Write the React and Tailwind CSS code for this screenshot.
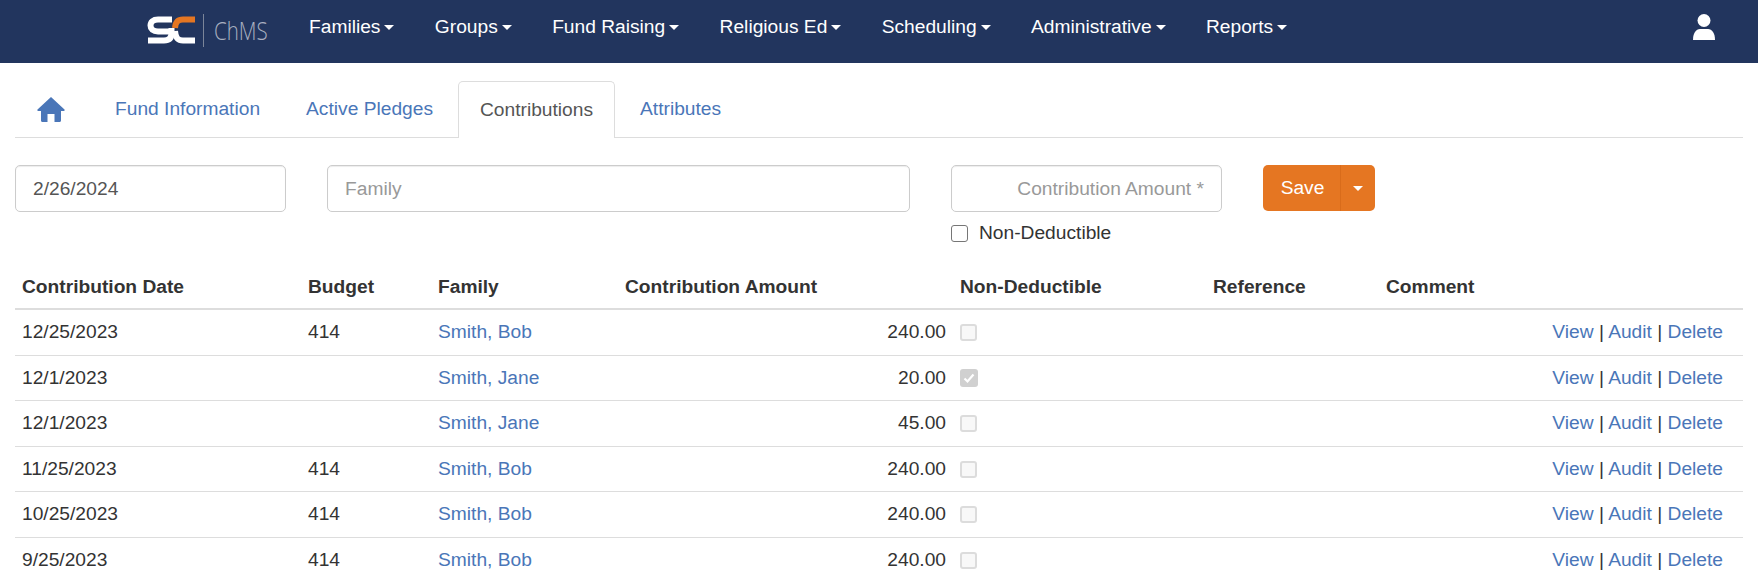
const navItems = ['Families', 'Groups', 'Fund Raising', 'Religious Ed', 'Scheduling', 'Administrative', 'Reports'];

const rows = [
  { date: '12/25/2023', budget: '414', family: 'Smith, Bob', amount: '240.00', checked: false },
  { date: '12/1/2023', budget: '', family: 'Smith, Jane', amount: '20.00', checked: true },
  { date: '12/1/2023', budget: '', family: 'Smith, Jane', amount: '45.00', checked: false },
  { date: '11/25/2023', budget: '414', family: 'Smith, Bob', amount: '240.00', checked: false },
  { date: '10/25/2023', budget: '414', family: 'Smith, Bob', amount: '240.00', checked: false },
  { date: '9/25/2023', budget: '414', family: 'Smith, Bob', amount: '240.00', checked: false },
];

function Logo() {
  return (
    <svg width="50" height="28" viewBox="0 0 50 28" fill="none">
      <path d="M25 3.5H11C6 3.5 3.5 6 3.5 9.5C3.5 13 6 15.5 11 15.5H25" stroke="#fff" strokeWidth="6" />
      <path d="M24.5 12V17C24.5 22 22 24.5 17 24.5H1" stroke="#fff" strokeWidth="6" />
      <path d="M48 3.5H36C31 3.5 28.5 6 28 12" stroke="#e57622" strokeWidth="6" />
      <path d="M28 15C28.5 22 31 24.5 36 24.5H48" stroke="#fff" strokeWidth="6" />
    </svg>
  );
}

function HomeIcon() {
  return (
    <svg width="28" height="25" viewBox="0 0 28 25" fill="#4a76b8">
      <path d="M14 0L27.5 12.5C28 13.2 27.6 14 26.8 14H24V23.5C24 24.4 23.4 25 22.5 25H17.5V17H10.5V25H5.5C4.6 25 4 24.4 4 23.5V14H1.2C.4 14 0 13.2.5 12.5Z" />
    </svg>
  );
}

function UserIcon() {
  return (
    <svg width="22" height="26" viewBox="0 0 22 26" fill="#fff">
      <circle cx="11" cy="6.5" r="6.5" />
      <path d="M0 26C0 19 3 15 7 15H15C19 15 22 19 22 26Z" />
    </svg>
  );
}

function RowCheck({ checked }) {
  if (checked) {
    return (
      <span className="flex h-[18px] w-[18px] items-center justify-center rounded-[3px] bg-[#d0d0d0]">
        <svg width="14" height="14" viewBox="0 0 14 14" fill="none">
          <path d="M2.5 7.5L5.5 10.5L11.5 3.5" stroke="#fff" strokeWidth="2.2" />
        </svg>
      </span>
    );
  }
  return <span className="block h-[17px] w-[17px] rounded-[3px] border-2 border-[#dcdcdc] bg-[#f8f8f8]" />;
}

export default function App() {
  return (
    <div className="h-[576px] overflow-hidden bg-white font-['Liberation_Sans',Arial,sans-serif] text-[19.2px] text-[#333]">
      <nav className="flex h-[63px] items-center bg-[#22355e] pb-[9px] pl-[147px] pr-[43px] text-white">
        <div className="mt-[6px] flex w-[162px] items-center">
          <Logo />
          <span className="ml-[6px] h-[33px] w-px bg-[#7b8599]" />
          <span className="ml-[10px] inline-block origin-left scale-x-[0.82] font-['Open_Sans',sans-serif] text-[25px] font-light leading-none text-[#a9b0c0]">ChMS</span>
        </div>
        <div className="flex gap-[40.4px]">
          {navItems.map(item => (
            <a key={item} className="flex items-center gap-[4px]">
              {item}
              <span className="mt-[1px] border-x-[5px] border-t-[5px] border-x-transparent border-t-white" />
            </a>
          ))}
        </div>
        <span className="ml-auto"><UserIcon /></span>
      </nav>

      <div className="mx-[15px] mt-[18px] flex h-[57px] border-b border-[#ddd]">
        <a className="flex w-[100px] items-center pl-[22px]">
          <HomeIcon />
        </a>
        <a className="flex items-center pr-[46px] text-[#4a76b8]">Fund Information</a>
        <a className="flex items-center pr-[25px] text-[#4a76b8]">Active Pledges</a>
        <a className="-mb-px flex items-center rounded-t-[5px] border border-b-0 border-[#ddd] bg-white px-[21px] text-[#555]">Contributions</a>
        <a className="flex items-center pl-[25px] text-[#4a76b8]">Attributes</a>
      </div>

      <div className="mx-[15px] mt-[27px] flex items-start">
        <div className="flex h-[47px] w-[271px] items-center rounded-[5px] border border-[#ccc] px-[17px] pt-[1px] text-[#555] shadow-[inset_0_1px_1px_rgba(0,0,0,0.075)]">2/26/2024</div>
        <div className="ml-[41px] flex h-[47px] w-[583px] items-center rounded-[5px] border border-[#ccc] px-[17px] pt-[1px] text-[#999] shadow-[inset_0_1px_1px_rgba(0,0,0,0.075)]">Family</div>
        <div className="ml-[41px] w-[271px]">
          <div className="flex h-[47px] items-center justify-end rounded-[5px] border border-[#ccc] px-[17px] pt-[1px] text-[#999] shadow-[inset_0_1px_1px_rgba(0,0,0,0.075)]">Contribution Amount *</div>
          <label className="mt-[7px] flex items-center gap-[11px]">
            <span className="h-[17px] w-[17px] rounded-[3px] border border-[#767676]" />
            Non-Deductible
          </label>
        </div>
        <div className="ml-[41px] flex h-[46px] w-[112px] rounded-[5px] bg-[#e57622] text-white">
          <span className="flex w-[78px] items-center justify-center border-r border-[#d96c1b] pl-[2px]">Save</span>
          <span className="flex flex-1 items-center justify-center">
            <span className="border-x-[5px] border-t-[5px] border-x-transparent border-t-white" />
          </span>
        </div>
      </div>

      <table className="mx-[15px] mt-[17px] w-[1728px] table-fixed border-collapse">
        <colgroup>
          <col className="w-[286px]" />
          <col className="w-[130px]" />
          <col className="w-[187px]" />
          <col className="w-[335px]" />
          <col className="w-[253px]" />
          <col className="w-[173px]" />
          <col className="w-[364px]" />
        </colgroup>
        <thead>
          <tr className="h-[44px] border-b-2 border-[#ddd] text-left font-bold">
            <th className="px-[7px] pt-[2px]">Contribution Date</th>
            <th className="px-[7px] pt-[2px]">Budget</th>
            <th className="px-[7px] pt-[2px]">Family</th>
            <th className="px-[7px] pt-[2px]">Contribution Amount</th>
            <th className="px-[7px] pt-[2px]">Non-Deductible</th>
            <th className="px-[7px] pt-[2px]">Reference</th>
            <th className="px-[7px] pt-[2px]">Comment</th>
          </tr>
        </thead>
        <tbody>
          {rows.map((r, i) => (
            <tr key={i} className={i === 0 ? 'h-[46.5px] border-b border-[#ddd]' : 'h-[45.5px] border-b border-[#ddd]'}>
              <td className="px-[7px]">{r.date}</td>
              <td className="px-[7px]">{r.budget}</td>
              <td className="px-[7px] text-[#4a76b8]">{r.family}</td>
              <td className="px-[7px] text-right">{r.amount}</td>
              <td className="px-[7px]"><RowCheck checked={r.checked} /></td>
              <td className="px-[7px]"></td>
              <td className="pr-[20px] text-right">
                <a className="text-[#4a76b8]">View</a> | <a className="text-[#4a76b8]">Audit</a> | <a className="text-[#4a76b8]">Delete</a>
              </td>
            </tr>
          ))}
        </tbody>
      </table>
    </div>
  );
}
